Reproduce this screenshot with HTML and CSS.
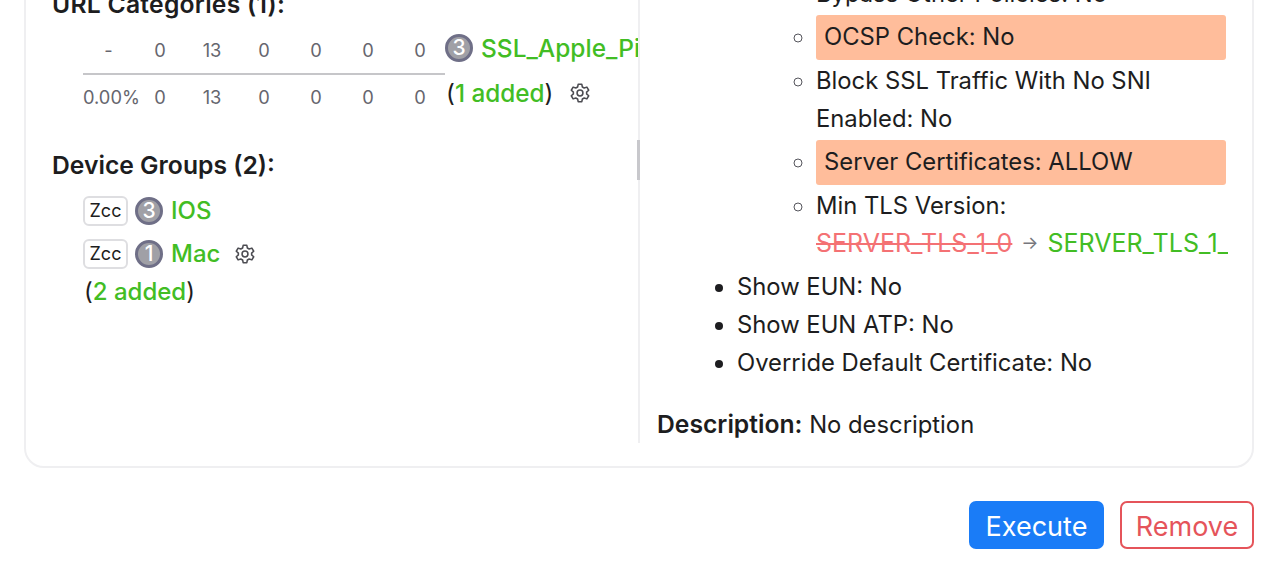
FILE: index.html
```html
<!DOCTYPE html>
<html lang="en">
<head>
    <meta charset="UTF-8">
    <meta name="viewport" content="width=device-width, initial-scale=1.0">
    <title>Rule details</title>
    <link rel="stylesheet" href="styles.css">
</head>
<body>
    <svg class="defs" width="0" height="0">
        <symbol id="gear" viewBox="0 0 24 24">
            <path fill="none" stroke="currentColor" stroke-width="1.7" stroke-linejoin="round" d="M10 2.5h4l.6 3 2 1.1 2.9-1 2 3.4-2.3 2a7 7 0 0 1 0 2l2.3 2-2 3.4-2.9-1-2 1.1-.6 3h-4l-.6-3-2-1.1-2.9 1-2-3.4 2.3-2a7 7 0 0 1 0-2l-2.3-2 2-3.4 2.9 1 2-1.1z"/>
            <circle cx="12" cy="12" r="3.2" fill="none" stroke="currentColor" stroke-width="1.7"/>
        </symbol>
    </svg>
    <div class="card">
        <div class="col_left">
            <h4 class="title url_title">URL Categories (1):</h4>
            <div class="url_row">
                <div class="stats">
                    <div class="stat_row stat_head">
                        <span>-</span><span>0</span><span>13</span><span>0</span><span>0</span><span>0</span><span>0</span>
                    </div>
                    <div class="stat_row">
                        <span>0.00%</span><span>0</span><span>13</span><span>0</span><span>0</span><span>0</span><span>0</span>
                    </div>
                </div>
                <div class="url_side">
                    <div class="item url_item"><span class="count">3</span><span class="green">SSL_Apple_Pinning</span></div>
                    <div class="item added_row"><span>(<span class="green">1 added</span>)</span><svg class="gear"><use href="#gear"/></svg></div>
                </div>
            </div>
            <h4 class="title groups_title">Device Groups (2):</h4>
            <div class="groups">
                <div class="item"><span class="tag">Zcc</span><span class="count">3</span><span class="green">IOS</span></div>
                <div class="item"><span class="tag">Zcc</span><span class="count">1</span><span class="green">Mac</span><svg class="gear"><use href="#gear"/></svg></div>
                <div class="item groups_added">
                    <span>(<span class="green">2 added</span>)</span>
                </div>
            </div>
        </div>
        <div class="col_right">
            <div class="thumb"></div>
            <ul class="outer">
                <li>
                    <ul class="inner">
                        <li>Bypass Other Policies: No</li>
                        <li><div class="changed">OCSP Check: No</div></li>
                        <li>Block SSL Traffic With No SNI Enabled: No</li>
                        <li class="spaced"><div class="changed">Server Certificates: ALLOW</div></li>
                        <li>Min TLS Version:<div class="diff"><span class="old">SERVER_TLS_1_0</span><span class="arrow">→</span><span class="green">SERVER_TLS_1_2</span></div></li>
                    </ul>
                </li>
                <li>Show EUN: No</li>
                <li>Show EUN ATP: No</li>
                <li>Override Default Certificate: No</li>
            </ul>
            <p class="desc"><b>Description:</b> No description</p>
        </div>
    </div>
    <div class="actions">
        <div class="btn execute">Execute</div>
        <div class="btn remove">Remove</div>
    </div>
</body>
</html>
```

FILE: styles.css
```css
*{
    margin: 0;
    padding: 0;
    box-sizing: border-box;
    font-family: Inter, "Liberation Sans", sans-serif;
}
body{
    height: 572px;
    width: 1280px;
    overflow: hidden;
    background: #fff;
    color: #1d1d20;
    font-size: 23.8px;
}
.defs{
    position: absolute;
}
.card{
    width: 1230px;
    height: 501px;
    margin: -33px 0 0 24px;
    border: 2px solid #efeff1;
    border-radius: 20px;
    display: flex;
}
.col_left{
    width: 612px;
    height: 474px;
    padding: 19px 0 0 26px;
    overflow: hidden;
    flex-shrink: 0;
}
.title{
    font-size: 24.7px;
    font-weight: 600;
    line-height: 32px;
}
.url_title{
    letter-spacing: 0.25px;
}
.url_row{
    display: flex;
    margin: 13px 0 0 31px;
}
.stats{
    width: 362px;
    flex-shrink: 0;
    color: #66666e;
    font-size: 18.3px;
}
.stat_row{
    display: grid;
    grid-template-columns: 51px repeat(6, 52px);
    height: 44px;
    align-items: center;
    text-align: center;
}
.stat_head{
    height: 42px;
    padding-bottom: 6px;
    border-bottom: 2px solid #c6c6c9;
}
.url_side{
    white-space: nowrap;
}
.item{
    display: flex;
    align-items: center;
    height: 43px;
    font-size: 24px;
}
.url_item{
    height: 28px;
    margin-top: 1px;
    font-size: 24.5px;
}
.added_row{
    margin-top: 15px;
    height: 32px;
    padding-left: 1px;
    font-size: 24.3px;
}
.count{
    width: 28px;
    height: 28px;
    border-radius: 50%;
    background: #a0a0a6;
    border: 3.5px solid #6f6f87;
    color: #fff;
    font-size: 21px;
    font-weight: 500;
    line-height: 21px;
    text-align: center;
    margin-right: 8px;
    flex-shrink: 0;
}
.green{
    color: #42bd24;
    font-weight: 500;
}
.gear{
    width: 22px;
    height: 22px;
    margin-left: 16px;
    color: #4c4c52;
}
.groups_title{
    margin-top: 30px;
}
.groups{
    margin: 8px 0 0 31px;
}
.groups .count{
    margin-left: 7px;
    margin-right: 8px;
}
.groups_added{
    margin-top: -5px;
    padding-left: 1px;
}
.tag{
    width: 45px;
    height: 30px;
    border: 2px solid #dedee1;
    border-radius: 6px;
    font-size: 18px;
    line-height: 26px;
    text-align: center;
}
.groups .gear{
    margin-left: 14px;
}
.col_right{
    width: 614px;
    flex: none;
    height: 474px;
    border-left: 2px solid #efeff1;
    position: relative;
    padding-right: 26px;
}
.thumb{
    position: absolute;
    left: -3px;
    top: 171px;
    width: 3px;
    height: 40px;
    background: #c8c8cc;
}
.outer{
    margin: 6px 0 0 97px;
    list-style: disc;
    line-height: 38px;
}
.outer > li:first-child{
    list-style: none;
}
.inner{
    list-style: circle;
    padding-left: 79px;
    margin-bottom: 6.5px;
}
.inner li{
    margin-bottom: 1.5px;
}
.inner li::marker{
    color: #55555c;
}
.inner .spaced{
    margin-top: 2px;
}
.changed{
    background: #ffbd9b;
    border-radius: 3px;
    padding: 0 8px;
    height: 45.5px;
    line-height: 44.5px;
}
.diff{
    display: flex;
    align-items: center;
    white-space: nowrap;
    overflow: hidden;
    margin: -1px -2px 0 0;
    font-size: 25px;
}
.old{
    color: #f47174;
    text-decoration: line-through;
}
.arrow{
    color: #77777d;
    margin: 0 9px;
    font-size: 18px;
}
.diff .green{
    font-weight: 400;
}
.desc{
    margin: 23px 0 0 17px;
    line-height: 38px;
}
.desc b{
    font-size: 24.7px;
    font-weight: 600;
}
.actions{
    display: flex;
    justify-content: flex-end;
    gap: 16px;
    width: 1254px;
    margin-top: 33px;
}
.btn{
    height: 48px;
    border-radius: 7px;
    font-size: 27px;
    line-height: 51px;
    text-align: center;
}
.execute{
    width: 135px;
    background: #1a7cf7;
    color: #fff;
}
.remove{
    width: 134px;
    border: 2px solid #e5545a;
    color: #e5545a;
    line-height: 47.5px;
}
```
